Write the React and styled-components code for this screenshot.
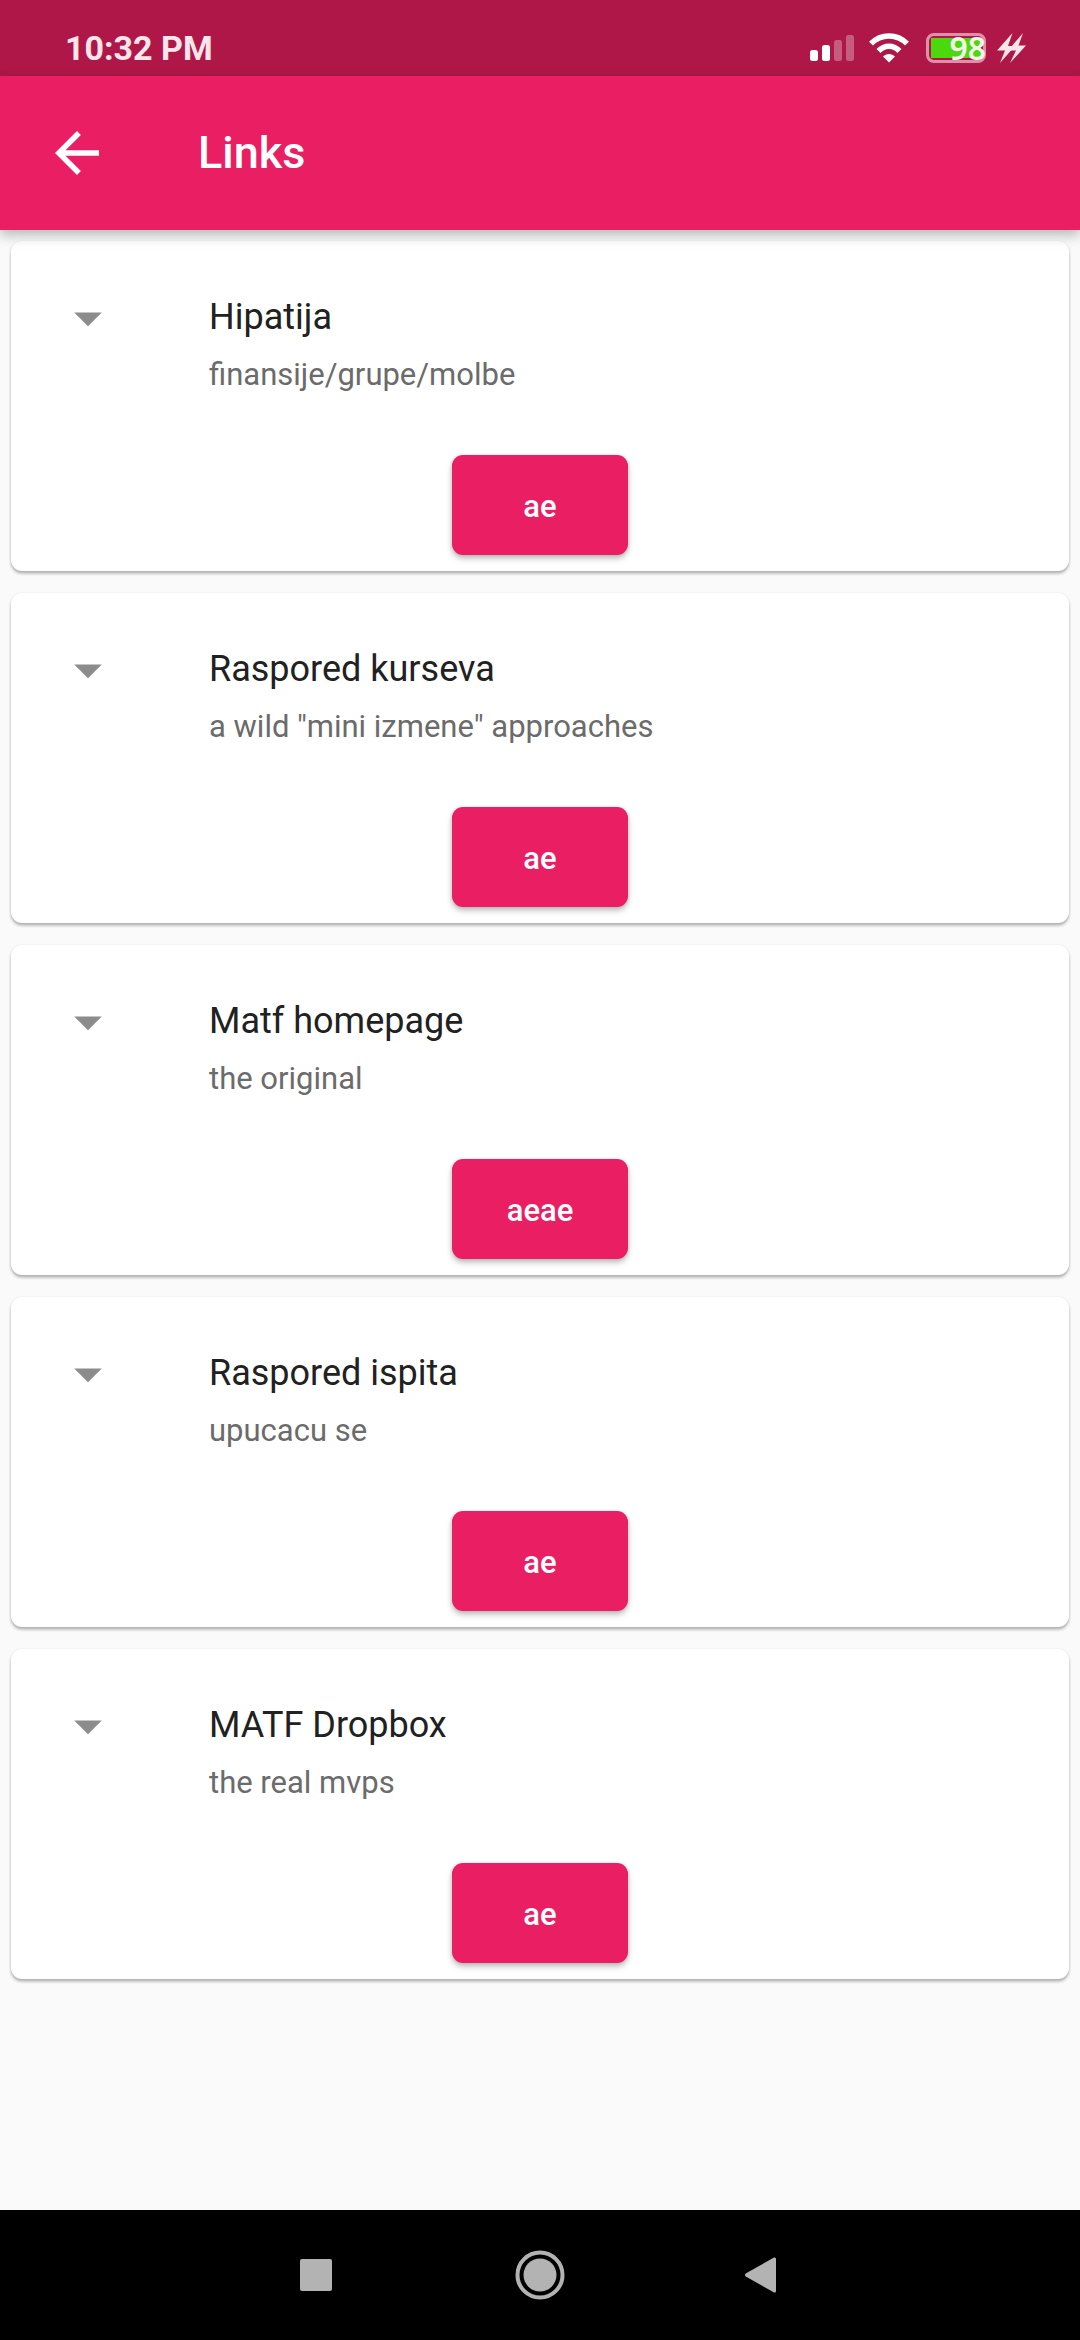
import React from "react";
import styled, { createGlobalStyle } from "styled-components";

const GlobalStyle = createGlobalStyle`
  * { box-sizing: border-box; }
  body {
    margin: 0;
    background: #fafafa;
    font-family: Roboto, "Noto Sans", sans-serif;
  }
`;

const Screen = styled.div`
  display: flex;
  flex-direction: column;
  min-height: 100vh;
`;

const StatusBar = styled.div`
  display: flex;
  align-items: flex-end;
  justify-content: space-between;
  height: 76px;
  padding: 0 54px 8px 65px;
  background: #ae1747;
`;

const Clock = styled.time`
  color: #f9e6ec;
  font-size: 34px;
  font-weight: 700;
  line-height: 40px;
`;

const StatusIcons = styled.div`
  display: flex;
  align-items: center;
  height: 40px;
`;

const StatusIcon = styled.svg`
  display: block;
  margin-left: ${(p) => p.$gap || 0}px;
`;

const Battery = styled.div`
  display: flex;
  align-items: center;
  justify-content: flex-end;
  width: 60px;
  height: 30px;
  margin: 0 10px 0 17px;
  border: 3px solid #e08fa9;
  border-radius: 8px;
  background: linear-gradient(#4bd80c, #4bd80c) 2px 2px / 50px 20px no-repeat;
`;

const BatteryLevel = styled.span`
  margin-right: -3px;
  color: #f4f4ea;
  font-family: "Noto Sans", Roboto, sans-serif;
  font-size: 32px;
  font-weight: 600;
  line-height: 30px;
`;

const AppBar = styled.header`
  position: relative;
  z-index: 1;
  display: flex;
  align-items: center;
  gap: 44px;
  height: 154px;
  background: #e91e63;
  color: #fff;
  box-shadow: 0 4px 11px rgba(0, 0, 0, 0.24), 0 10px 14px rgba(0, 0, 0, 0.05);
`;

const BackButton = styled.button`
  display: grid;
  place-items: center;
  width: 154px;
  height: 154px;
  padding: 0;
  border: 0;
  background: none;
  color: inherit;
`;

const Title = styled.h1`
  margin: 0;
  font-size: 45px;
  font-weight: 500;
  line-height: 52px;
`;

const List = styled.main`
  display: flex;
  flex: 1;
  flex-direction: column;
  gap: 22px;
  padding: 11px;
`;

const Card = styled.article`
  border-radius: 11px;
  background: #fff;
  box-shadow: 0 3px 3px rgba(0, 0, 0, 0.2), 0 1px 3px rgba(0, 0, 0, 0.16);
`;

const Tile = styled.div`
  display: flex;
  gap: 88px;
  min-height: 198px;
  padding: 44px 44px 0;
`;

const TileText = styled.div`
  display: flex;
  flex-direction: column;
  gap: 16px;
  padding-top: 10px;
`;

const CardTitle = styled.h2`
  margin: 0;
  color: #212121;
  font-size: 36px;
  font-weight: 400;
  line-height: 44px;
`;

const Subtitle = styled.p`
  margin: 0;
  color: #6b6b6b;
  font-size: 31px;
  line-height: 40px;
`;

const Actions = styled.div`
  display: flex;
  align-items: center;
  justify-content: center;
  height: 132px;
`;

const ActionButton = styled.button`
  min-width: 176px;
  height: 100px;
  padding: 4px 44px 0;
  border: 0;
  border-radius: 11px;
  background: #e91e63;
  color: #fff;
  font: 500 31px/40px Roboto, "Noto Sans", sans-serif;
  box-shadow: 0 4px 6px rgba(0, 0, 0, 0.2), 0 1px 4px rgba(0, 0, 0, 0.16);
`;

const NavBar = styled.nav`
  display: flex;
  justify-content: center;
  height: 130px;
  background: #000;
`;

const NavButton = styled.button`
  display: grid;
  place-items: center;
  width: 224px;
  padding: 0;
  border: 0;
  background: none;
  color: #b3b3b3;
`;

const links = [
  { title: "Hipatija", subtitle: "finansije/grupe/molbe", action: "ae" },
  { title: "Raspored kurseva", subtitle: 'a wild "mini izmene" approaches', action: "ae" },
  { title: "Matf homepage", subtitle: "the original", action: "aeae" },
  { title: "Raspored ispita", subtitle: "upucacu se", action: "ae" },
  { title: "MATF Dropbox", subtitle: "the real mvps", action: "ae" },
];

function LinkCard({ title, subtitle, action }) {
  return (
    <Card>
      <Tile>
        <svg width="66" height="66" viewBox="0 0 24 24" fill="#8c8c8c" aria-hidden="true">
          <path d="M7 10l5 5 5-5z" />
        </svg>
        <TileText>
          <CardTitle>{title}</CardTitle>
          <Subtitle>{subtitle}</Subtitle>
        </TileText>
      </Tile>
      <Actions>
        <ActionButton type="button">{action}</ActionButton>
      </Actions>
    </Card>
  );
}

export default function App() {
  return (
    <Screen>
      <GlobalStyle />
      <StatusBar>
        <Clock>10:32 PM</Clock>
        <StatusIcons>
          <StatusIcon width="44" height="26" viewBox="0 0 44 26" fill="#fff" aria-hidden="true">
            <rect x="0" y="15" width="8" height="11" rx="2.5" />
            <rect x="12" y="10" width="8" height="16" rx="2.5" />
            <rect x="24" y="5" width="8" height="21" rx="2.5" opacity="0.3" />
            <rect x="36" y="0" width="8" height="26" rx="2.5" opacity="0.3" />
          </StatusIcon>
          <StatusIcon $gap={15} width="40" height="30" viewBox="0 0 40 30" aria-hidden="true">
            <g fill="none" stroke="#fff" strokeWidth="5.6">
              <path d="M2 10.6C12 0.4 28 0.4 38 10.6" />
              <path d="M9.5 18C15.5 11.6 24.5 11.6 30.5 18" />
            </g>
            <path d="M14 23.6C17.4 20.2 22.6 20.2 26 23.6L20 29.6Z" fill="#fff" />
          </StatusIcon>
          <Battery>
            <BatteryLevel>98</BatteryLevel>
          </Battery>
          <StatusIcon width="30" height="30" viewBox="0 0 30 30" fill="#f9e6ec" aria-hidden="true">
            <path d="M16.5 0L1 17.5H9L4 30L19 13H12Z" />
            <path d="M27 0L12 17.5H20L14 30L30 12.5H22.5Z" />
          </StatusIcon>
        </StatusIcons>
      </StatusBar>
      <AppBar>
        <BackButton type="button" aria-label="Back">
          <svg width="66" height="66" viewBox="0 0 24 24" fill="currentColor" aria-hidden="true">
            <path d="M20 11H7.83l5.59-5.59L12 4l-8 8 8 8 1.41-1.41L7.83 13H20v-2z" />
          </svg>
        </BackButton>
        <Title>Links</Title>
      </AppBar>
      <List>
        {links.map((link) => (
          <LinkCard key={link.title} {...link} />
        ))}
      </List>
      <NavBar>
        <NavButton type="button" aria-label="Recent apps">
          <svg width="32" height="32" viewBox="0 0 32 32" fill="currentColor">
            <rect width="32" height="32" rx="2" />
          </svg>
        </NavButton>
        <NavButton type="button" aria-label="Home">
          <svg width="50" height="50" viewBox="0 0 50 50" fill="currentColor">
            <circle cx="25" cy="25" r="16.5" />
            <circle cx="25" cy="25" r="22.5" fill="none" stroke="currentColor" strokeWidth="4" />
          </svg>
        </NavButton>
        <NavButton type="button" aria-label="Back">
          <svg width="40" height="36" viewBox="0 0 40 36" fill="currentColor">
            <path d="M1.7 16.6L30 0.5Q32 0 32 2V34Q32 36 30 35.5L1.7 19.4Q0.3 18 1.7 16.6Z" />
          </svg>
        </NavButton>
      </NavBar>
    </Screen>
  );
}
